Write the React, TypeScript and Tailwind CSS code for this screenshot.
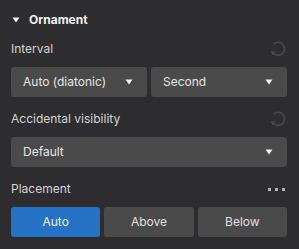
import React from 'react';

function Caret() {
  return (
    <svg width="8" height="6" viewBox="0 0 8 6" className="shrink-0">
      <path d="M0.5 0.5 L7.5 0.5 L4 5.5 Z" fill="#f2f2f2" />
    </svg>
  );
}

// dim circular reset arrow
function ResetIcon() {
  return (
    <svg width="18" height="18" viewBox="0 0 18 18" className="shrink-0">
      <path d="M4.4 4.4 A6.5 6.5 0 1 1 3.8 12.6" fill="none" stroke="#4a4a4c" strokeWidth="1.5" />
      <path d="M1.6 11.2 L6.4 11.4 L3.6 15.4 Z" fill="#4a4a4c" />
    </svg>
  );
}

function Select({ label, className }: { label: string; className?: string }) {
  return (
    <div className={`h-[30px] rounded-[3px] bg-[#4a4a4b] flex items-center justify-between pl-[12px] pr-[14px] ${className ?? ''}`}>
      <span className="text-[12px] text-[#e6e6e6]">{label}</span>
      <Caret />
    </div>
  );
}

function Label({ text, right }: { text: string; right?: React.ReactNode }) {
  return (
    <div className="h-[22px] flex items-center justify-between">
      <span className="text-[12px] text-[#d4d4d4]">{text}</span>
      {right}
    </div>
  );
}

export default function App() {
  return (
    <div
      className="w-[299px] h-[249px] bg-[#2d2d2f] pl-[11px] pr-[12px] flex flex-col"
      style={{ fontFamily: 'Inter, "Noto Sans", sans-serif' }}
    >
      {/* Header */}
      <div className="h-[38px] pt-[1px] flex items-center pl-[1px]">
        <svg width="8" height="6" viewBox="0 0 8 6" className="shrink-0">
          <path d="M0.5 0.5 L7.5 0.5 L4 5.5 Z" fill="#f0f0f0" />
        </svg>
        <span className="ml-[9px] text-[12px] font-bold text-[#f2f2f2]">Ornament</span>
      </div>

      <Label text="Interval" right={<ResetIcon />} />
      <div className="mt-[7px] flex gap-[4px]">
        <Select label="Auto (diatonic)" className="w-[136px]" />
        <Select label="Second" className="flex-1" />
      </div>

      <div className="mt-[11px]">
        <Label text="Accidental visibility" right={<ResetIcon />} />
      </div>
      <Select label="Default" className="mt-[7px]" />

      <div className="mt-[11px]">
        <Label
          text="Placement"
          right={
            <div className="flex gap-[4px] pr-[2px]">
              <span className="w-[3px] h-[3px] bg-[#b4b4b8]" />
              <span className="w-[3px] h-[3px] bg-[#b4b4b8]" />
              <span className="w-[3px] h-[3px] bg-[#b4b4b8]" />
            </div>
          }
        />
      </div>
      <div className="mt-[7px] grid grid-cols-3 gap-[4px]">
        <div className="h-[30px] rounded-[3px] bg-[#2672c4] flex items-center justify-center text-[12px] text-[#f0f4fa]">Auto</div>
        <div className="h-[30px] rounded-[3px] bg-[#4a4a4b] flex items-center justify-center text-[12px] text-[#e0e0e0]">Above</div>
        <div className="h-[30px] rounded-[3px] bg-[#4a4a4b] flex items-center justify-center text-[12px] text-[#e0e0e0]">Below</div>
      </div>
    </div>
  );
}
